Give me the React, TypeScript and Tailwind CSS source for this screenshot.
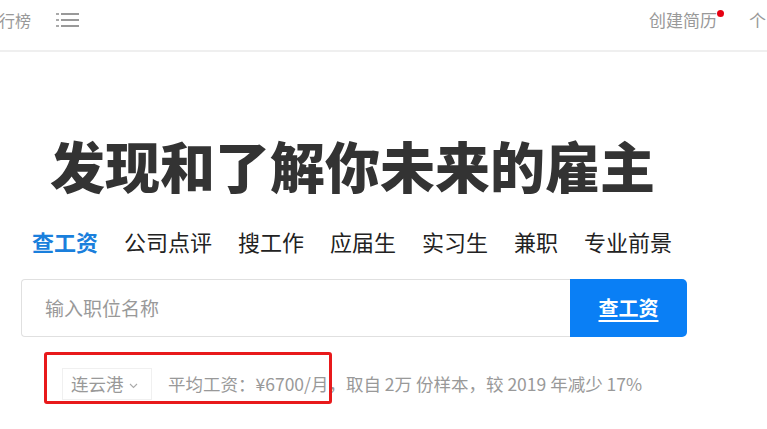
import React from "react";

const font = { fontFamily: '"Noto Sans CJK SC", "Noto Sans", Arial, sans-serif' };

export default function App() {
  const tabs = ["公司点评", "搜工作", "应届生", "实习生", "兼职", "专业前景"];
  return (
    <div
      className="relative w-[767px] h-[429px] overflow-hidden bg-white"
      style={font}
    >
      {/* header */}
      <div className="flex h-[52px] items-start justify-between border-b-2 border-[#efefef] pt-[9px]">
        <div className="flex items-center">
          <span className="text-[16px] leading-[22px] text-[#999] -ml-[1px]">行榜</span>
          <svg className="ml-[25px]" width="23" height="18" viewBox="0 0 23 18">
            <rect x="0" y="2" width="3" height="2" fill="#aaa" />
            <rect x="5" y="2" width="18" height="2" fill="#999" />
            <rect x="0" y="8" width="3" height="2" fill="#aaa" />
            <rect x="5" y="8" width="18" height="2" fill="#999" />
            <rect x="0" y="14" width="3" height="2" fill="#aaa" />
            <rect x="5" y="14" width="18" height="2" fill="#999" />
          </svg>
        </div>
        <div className="flex items-center whitespace-nowrap mr-[1px]">
          <span className="relative text-[17px] leading-[22px] text-[#999]">
            创建简历
            <span className="absolute -right-[7px] top-[1px] h-[7px] w-[7px] rounded-full bg-[#e60012]" />
          </span>
          <span className="ml-[32px] text-[17px] leading-[22px] text-[#999]">个</span>
        </div>
      </div>

      {/* title */}
      <h1 className="ml-[50px] mt-[85px] text-[55px] font-black leading-none text-[#333] whitespace-nowrap">
        发现和了解你未来的雇主
      </h1>

      {/* tabs */}
      <div className="ml-[32px] mt-[38px] flex gap-[26px] text-[22px] leading-none whitespace-nowrap">
        <span className="font-bold text-[#1a7fdc]">查工资</span>
        {tabs.map((t) => (
          <span key={t} className="text-[#222]">
            {t}
          </span>
        ))}
      </div>

      {/* search */}
      <div className="ml-[21px] mt-[27px] flex h-[58px] w-[666px]">
        <div className="flex flex-1 items-center rounded-l-[4px] border border-r-0 border-[#e0e0e0] pl-[23px] text-[19px] text-[#999]">
          输入职位名称
        </div>
        <div className="flex w-[117px] items-center justify-center rounded-r-[5px] bg-[#0a7ff5] text-[20px] font-bold text-white underline underline-offset-[4px]">
          查工资
        </div>
      </div>

      {/* stats row */}
      <div className="ml-[62px] mt-[31px] flex items-center whitespace-nowrap">
        <div className="flex h-[32px] w-[90px] items-center border border-[#f0f0f0] pl-[8px] text-[17.5px] text-[#999]">
          连云港
          <svg className="ml-[5px] mt-[3px]" width="9" height="6" viewBox="0 0 9 6">
            <path d="M1 1 L4.5 4.5 L8 1" stroke="#aaa" strokeWidth="1.1" fill="none" />
          </svg>
        </div>
        <span className="ml-[16px] text-[17.5px] text-[#999]">
          平均工资：¥6700/月，取自 2万 份样本，较 2019 年减少 17%
        </span>
      </div>

      {/* red annotation box */}
      <div className="absolute left-[44px] top-[352px] h-[52px] w-[288px] rounded-[3px] border-[3px] border-[#e8191b]" />
    </div>
  );
}
